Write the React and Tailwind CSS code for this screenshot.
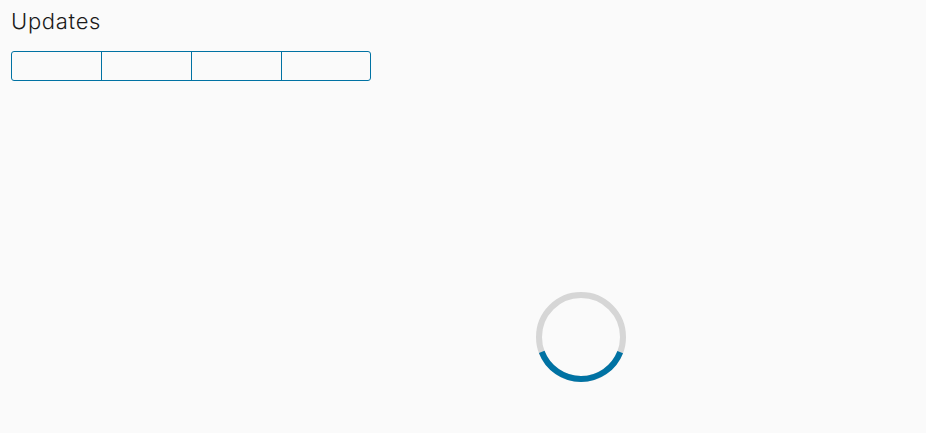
import React from 'react'

function Spinner() {
  const r = 42
  const c = 2 * Math.PI * r
  return (
    <svg width="92" height="92" viewBox="0 0 92 92" className="block">
      <circle cx="46" cy="46" r={r} fill="none" stroke="#d6d6d6" strokeWidth="6" />
      <circle
        cx="46"
        cy="46"
        r={r}
        fill="none"
        stroke="#0072a3"
        strokeWidth="6"
        strokeDasharray={`${(c * 138) / 360} ${c}`}
        strokeDashoffset={-(c * 21) / 360}
      />
    </svg>
  )
}

export default function App() {
  const tabs = [90, 90, 90, 88]
  return (
    <div className="min-h-screen w-full bg-[#fafafa] px-[11px] pt-[7px] font-['Inter','Lato',sans-serif]">
      <h1 className="text-[22px] leading-[28px] tracking-[0.7px] text-[#1a1a1a] font-light">Updates</h1>

      {/* button group */}
      <div className="mt-[16px] flex w-[360px] h-[30px] border border-[#0072a3] rounded-[3px] overflow-hidden">
        {tabs.map((w, i) => (
          <button
            key={i}
            style={{ width: w }}
            className="h-full shrink-0 bg-transparent border-r border-[#0072a3] last:border-r-0"
          ></button>
        ))}
      </div>

      {/* loading */}
      <div className="mt-[210px] ml-[524px]">
        <Spinner />
      </div>
    </div>
  )
}
